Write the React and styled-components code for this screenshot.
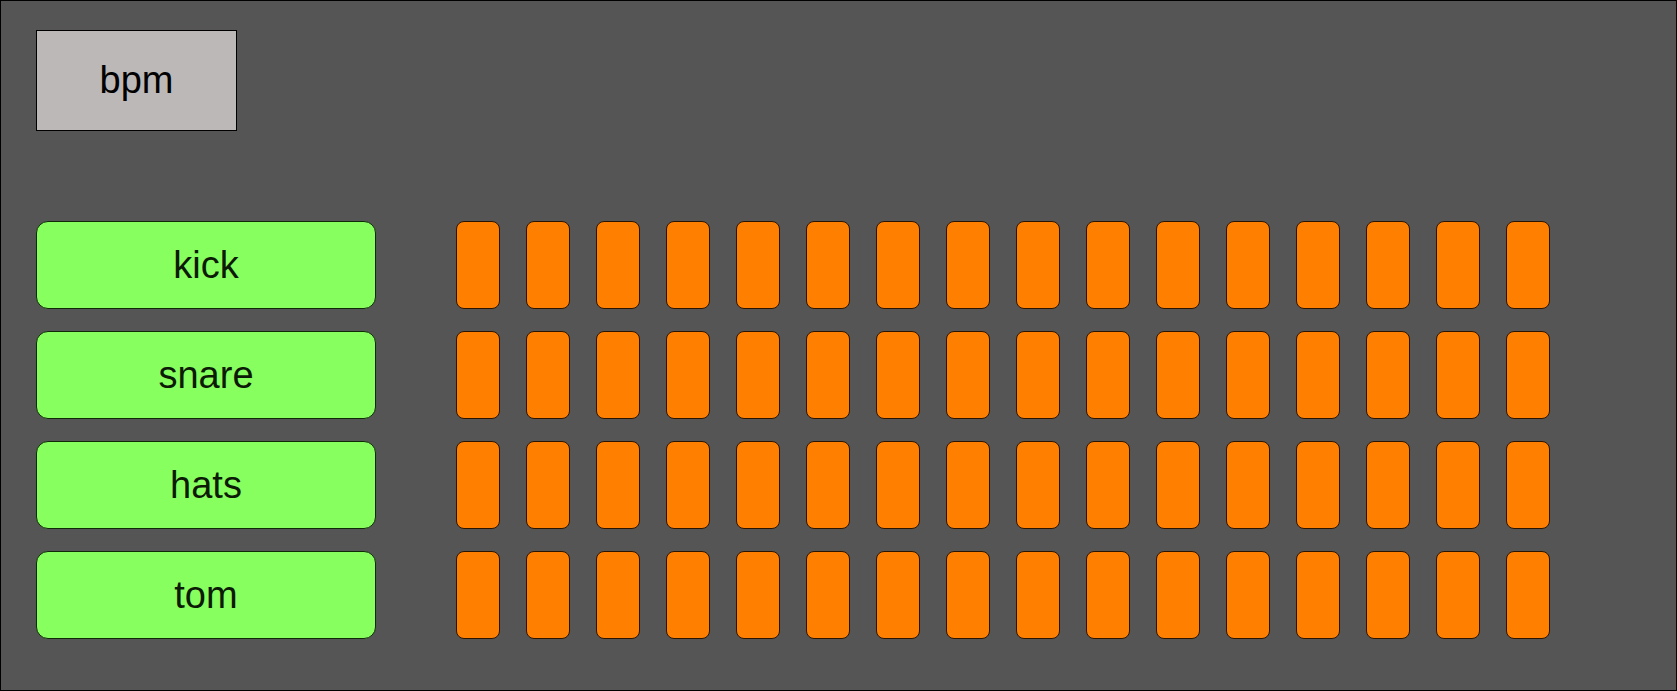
import styled, { createGlobalStyle } from "styled-components"

const GlobalStyle = createGlobalStyle`
html, body {
    margin: 0;
    padding: 0;
    background: #555555;
}
* {
    box-sizing: border-box;
}
`

const tracks = ["kick", "snare", "hats", "tom"]
const steps = Array.from({ length: 16 }, (_, i) => i)

export default function App() {
    return (
        <>
            <GlobalStyle />
            <Machine>
                <Bpm>bpm</Bpm>
                <Sequencer>
                    {tracks.map((name) => (
                        <Row key={name}>
                            <TrackButton>{name}</TrackButton>
                            <Steps>
                                {steps.map((s) => (
                                    <Pad key={s} />
                                ))}
                            </Steps>
                        </Row>
                    ))}
                </Sequencer>
            </Machine>
        </>
    )
}

const Machine = styled.div`
width: 1677px;
height: 691px;
border: 1px solid #000;
background: #555555;
padding: 29px 0 0 35px;
display: flex;
flex-direction: column;
font-family: "Liberation Sans", Arial, sans-serif;
`

const Bpm = styled.div`
width: 201px;
height: 101px;
background: #bbb8b7;
border: 1px solid #000;
display: flex;
align-items: center;
justify-content: center;
font-size: 38px;
color: #000;
`

const Sequencer = styled.div`
margin-top: 90px;
display: flex;
flex-direction: column;
gap: 22px;
`

const Row = styled.div`
display: flex;
align-items: center;
gap: 80px;
`

const TrackButton = styled.div`
width: 340px;
height: 88px;
background: #86ff5f;
border: 1px solid #102a08;
border-radius: 12px;
display: flex;
align-items: center;
justify-content: center;
font-size: 38px;
color: #0c1a06;
`

const Steps = styled.div`
display: flex;
gap: 26px;
`

const Pad = styled.div`
width: 44px;
height: 88px;
background: #ff8000;
border: 1px solid #2a1400;
border-radius: 8px;
`
